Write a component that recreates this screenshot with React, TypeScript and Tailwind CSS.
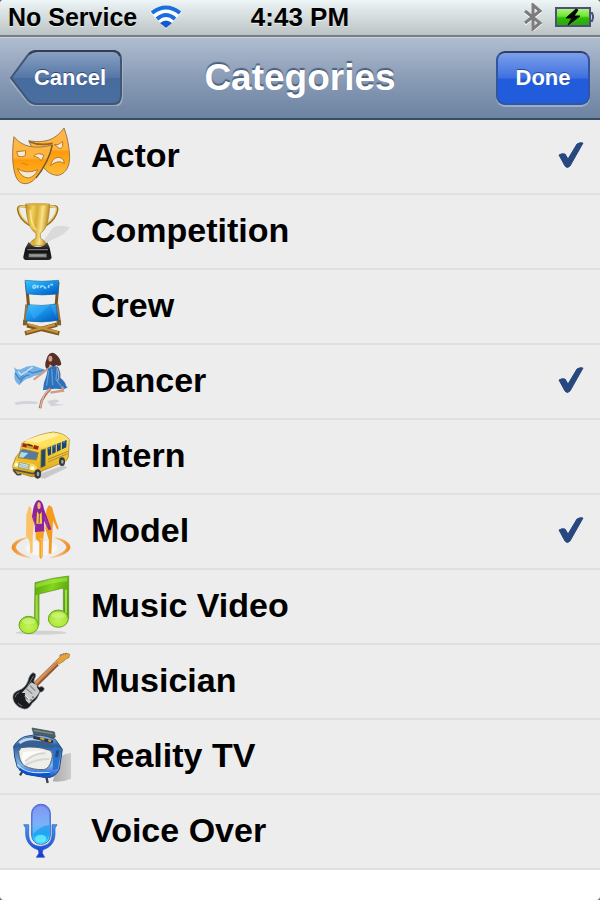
import { useState } from 'react';
import type { ReactNode } from 'react';

interface IconProps {
  viewBox: string;
  children: ReactNode;
}

function Icon({ viewBox, children }: IconProps) {
  return (
    <svg viewBox={viewBox} className="size-15 shrink-0 overflow-visible" aria-hidden="true">
      {children}
    </svg>
  );
}

const UPPER = '33 21 180 180';
const LOWER = '33 246 180 180';

function ActorIcon() {
  return (
    <Icon viewBox={UPPER}>
      <defs>
        <linearGradient id="mask" x1="0" y1="0" x2="0" y2="1">
          <stop offset="0" stopColor="#ffb84a" />
          <stop offset="0.45" stopColor="#ffb33a" />
          <stop offset="0.5" stopColor="#fe9a0c" />
          <stop offset="1" stopColor="#ffbd35" />
        </linearGradient>
      </defs>
      <path d="M86 62 C130 70 165 62 192 24 C202 50 208 82 209 112 C209 146 190 166 171 166 C140 164 120 132 104 100 Z" fill="url(#mask)" stroke="#9c7847" strokeWidth="3" />
      <path d="M88 65 C114 76 136 75 158 70" fill="none" stroke="#926524" strokeWidth="5" />
      <path d="M162 73 Q174 78 188 64 L188 80 Q180 90 172 80 Z" fill="#f3eadb" stroke="#bd7a20" strokeWidth="3" />
      <path d="M151 137 Q158 112 176 112 Q192 114 193 130 Q174 118 151 137 Z" fill="#f3eadb" stroke="#bd7a20" strokeWidth="3" />
      <path d="M42 50 C66 82 108 88 157 75 C150 108 133 143 105 176 C89 194 67 196 54 181 C38 160 34 105 42 50 Z" fill="url(#mask)" stroke="#9c7847" strokeWidth="3" />
      <path d="M157 75 C150 108 133 143 108 174" fill="none" stroke="#755a32" strokeWidth="4" />
      <path d="M50 95 L77 92 L76 107 Q66 113 55 109 Z" fill="#f3eadb" stroke="#bd7a20" strokeWidth="3" />
      <path d="M101 108 Q113 95 132 106 L124 122 Q116 111 101 108 Z" fill="#f3eadb" stroke="#bd7a20" strokeWidth="3" />
      <path d="M52 145 Q76 164 114 149 Q104 170 86 174 Q64 174 52 145 Z" fill="#f3eadb" stroke="#bd7a20" strokeWidth="3" />
      <path d="M66 129 L84 135" stroke="#e67e00" strokeWidth="3" />
    </Icon>
  );
}

function CompetitionIcon() {
  return (
    <Icon viewBox={LOWER}>
      <defs>
        <linearGradient id="gold" x1="0" y1="0" x2="1" y2="0.2">
          <stop offset="0" stopColor="#c18c15" />
          <stop offset="0.3" stopColor="#efcf5f" />
          <stop offset="0.5" stopColor="#d8ab31" />
          <stop offset="0.72" stopColor="#f8e38a" />
          <stop offset="1" stopColor="#b98111" />
        </linearGradient>
        <linearGradient id="plinth" x1="0" y1="0" x2="0" y2="1">
          <stop offset="0" stopColor="#555" />
          <stop offset="0.45" stopColor="#111" />
          <stop offset="1" stopColor="#222" />
        </linearGradient>
      </defs>
      <path d="M130 364 L158 324 Q178 312 210 322 Q195 344 160 357 L132 372 Z" fill="#d4d4d4" opacity="0.8" />
      <path d="M81 261 Q54 253 54 269 Q57 296 90 316 M147 261 Q173 253 172 269 Q168 296 138 316" fill="none" stroke="#9e751d" strokeWidth="7" />
      <path d="M81 261 Q56 254 57 269 Q61 294 90 313 M147 261 Q170 254 169 269 Q164 294 138 313" fill="none" stroke="#ecce70" strokeWidth="4" />
      <path d="M77 252 L149 252 C147 290 144 326 121 340 L121 354 Q137 363 142 377 L86 377 Q91 363 108 354 L108 340 C85 326 80 290 77 252 Z" fill="url(#gold)" stroke="#a47a20" strokeWidth="2" />
      <ellipse cx="113" cy="253" rx="35" ry="4" fill="#d9af43" />
      <path d="M91 270 Q92 310 108 331" fill="none" stroke="#fff0a8" strokeWidth="5" opacity="0.7" />
      <path d="M86 366 L98 378 Q115 384 131 377 L142 367 L149 383 L155 413 Q153 420 145 420 L76 420 Q69 418 70 410 L76 384 Z" fill="url(#plinth)" />
      <path d="M82 389 L144 389" stroke="#777" strokeWidth="4" />
      <rect x="86" y="401" width="54" height="11" fill="#858585" />
      <path d="M92 406 H134" stroke="#aaa" strokeWidth="2" />
    </Icon>
  );
}

function CrewIcon() {
  return (
    <Icon viewBox={UPPER}>
      <defs>
        <linearGradient id="canvasBlue" x1="0" y1="0" x2="1" y2="1">
          <stop offset="0" stopColor="#35c6ff" />
          <stop offset="0.5" stopColor="#168fe7" />
          <stop offset="1" stopColor="#0054b8" />
        </linearGradient>
      </defs>
      <path d="M79 36 L86 112 M174 36 L168 112" stroke="#7b541e" strokeWidth="9" />
      <path d="M81 166 L178 190 M171 164 L75 190" stroke="#7e581b" strokeWidth="13" />
      <path d="M86 163 L174 187 M165 164 L79 187" stroke="#c6933c" strokeWidth="7" />
      <path d="M76 150 L75 166 M176 150 L177 166" stroke="#8c5e1c" strokeWidth="13" />
      <path d="M75 31 Q125 37 176 31 L174 72 Q126 78 80 71 Z" fill="url(#canvasBlue)" stroke="#1b6fa8" strokeWidth="2" />
      <path d="M98 52 Q100 42 108 48 Q105 58 98 52 M112 55 L115 45 M121 54 Q123 45 130 49 M133 48 Q132 56 139 53 M145 54 L147 45 M151 44 L159 44" fill="none" stroke="#8fdcff" strokeWidth="5" />
      <path d="M84 104 Q125 110 169 102 L178 151 Q125 160 73 152 Z" fill="url(#canvasBlue)" stroke="#1666a2" strokeWidth="2" />
      <path d="M84 106 L100 148 L151 105 L170 145 L167 105 Z" fill="#50b8ff" opacity="0.35" />
      <path d="M79 103 L74 151 M172 101 L179 150" stroke="#98713b" strokeWidth="6" />
    </Icon>
  );
}

function DancerIcon() {
  return (
    <Icon viewBox={LOWER}>
      <path d="M43 398 Q70 389 116 396 L108 402 Q72 399 48 405 Z M141 394 Q172 383 178 393 L164 401 L195 404 L153 409 Z" fill="#d0d3d8" />
      <path d="M41 291 Q52 302 64 297 Q82 286 101 287 L137 300 L121 317 Q105 313 91 324 Q74 325 58 346 Q42 334 43 318 Q48 304 41 291 Z" fill="#75b2e6" />
      <path d="M45 309 L59 328 L79 301 L98 309 L131 300 M61 338 Q68 316 88 315" fill="none" stroke="#4488c8" strokeWidth="4" />
      <path d="M54 305 L64 315 L98 291" fill="none" stroke="#c3e0f6" strokeWidth="5" />
      <path d="M143 258 Q151 245 163 250 Q180 260 184 283 Q178 291 169 285 L160 292 L149 283 L147 299 Q134 298 136 278 Z" fill="#543028" />
      <ellipse cx="151" cy="266" rx="6" ry="9" fill="#d8a187" />
      <path d="M155 288 Q129 309 101 329" fill="none" stroke="#d69c87" strokeWidth="6" />
      <path d="M144 296 Q161 286 174 290 Q184 310 181 323 Q198 337 198 348 L203 352 Q193 360 178 357 Q160 354 129 361 Q130 337 139 318 Z" fill="#2c71ba" />
      <path d="M146 302 L140 347 M155 296 L158 345 M171 299 L168 329 L184 349" fill="none" stroke="#5b9ddb" strokeWidth="4" />
      <path d="M151 356 L137 372 L125 392 L120 415" fill="none" stroke="#a96f5a" strokeWidth="8" />
      <path d="M150 356 L134 373 L125 394 L121 413" fill="none" stroke="#e4b5a0" strokeWidth="4" />
      <path d="M151 368 L189 362 L187 350" fill="none" stroke="#d39b83" strokeWidth="7" />
      <path d="M170 293 Q181 311 173 334" fill="none" stroke="#e2ac98" strokeWidth="3" />
    </Icon>
  );
}

function BusIcon() {
  return (
    <Icon viewBox={UPPER}>
      <defs>
        <linearGradient id="bus" x1="0" y1="0" x2="0" y2="1">
          <stop offset="0" stopColor="#fff39e" />
          <stop offset="0.45" stopColor="#f5ca36" />
          <stop offset="1" stopColor="#d9a016" />
        </linearGradient>
      </defs>
      <path d="M100 169 L190 136 L202 143 L133 176 Z" fill="#c9c9c9" />
      <path d="M66 69 Q111 42 160 36 Q193 39 208 58 L205 111 Q201 124 188 128 L126 153 Q116 172 94 170 L40 154 L38 137 L47 112 L60 96 Z" fill="url(#bus)" stroke="#9a7924" strokeWidth="2" />
      <path d="M67 69 Q118 43 160 38 Q189 42 205 57 L127 83 Q96 74 67 69 Z" fill="#ffe15c" />
      <path d="M74 62 Q125 41 160 40 L179 46 L116 68 Z" fill="#fff1a0" />
      <path d="M61 93 L68 87 L115 98 L109 120 L55 113 Z" fill="#4f7da8" stroke="#a98122" strokeWidth="3" />
      <path d="M63 96 L85 99 L70 113 L57 112 Z" fill="#b0d9ee" />
      <path d="M67 70 L114 81 L112 90 L65 82 Z" fill="#d89d24" />
      <path d="M68 74 L80 77 M101 80 L115 84" stroke="#a52222" strokeWidth="11" />
      <path d="M82 73 L98 78" stroke="#4f3c14" strokeWidth="5" />
      <path d="M142 83 L200 60 L199 82 L144 108 Z" fill="#16467b" />
      <path d="M155 77 V104 M169 72 V98 M184 66 V91" stroke="#edbf2d" strokeWidth="4" />
      <path d="M145 86 L150 84 M160 80 L164 78 M174 74 L178 72 M189 67 L195 65" stroke="#4b80b5" strokeWidth="6" />
      <path d="M123 90 L137 86 L136 138 L122 144 Z" fill="#204b65" stroke="#b48922" strokeWidth="2" />
      <path d="M144 118 L204 94 M144 126 L203 101" stroke="#8d7130" strokeWidth="2" />
      <path d="M47 122 L101 132 Q114 139 113 154 L38 140 Z" fill="#f7d858" />
      <path d="M58 127 L88 134 L85 149 L55 142 Z" fill="#d7edf2" stroke="#8b7e40" strokeWidth="2" />
      <path d="M57 132 L87 140 M57 137 L86 145" stroke="#7f9ba5" strokeWidth="2" />
      <circle cx="49" cy="134" r="5" fill="#fff" />
      <circle cx="97" cy="145" r="6" fill="#fff" />
      <path d="M39 149 L98 161 L121 154" fill="none" stroke="#525447" strokeWidth="5" />
      <ellipse cx="113" cy="162" rx="10" ry="14" fill="#333b3c" />
      <ellipse cx="114" cy="162" rx="4" ry="7" fill="#a0a3a0" />
      <ellipse cx="186" cy="125" rx="9" ry="13" fill="#333b3c" />
      <ellipse cx="187" cy="125" rx="4" ry="6" fill="#a0a3a0" />
      <path d="M42 153 L52 164 L64 163" fill="none" stroke="#444" strokeWidth="5" />
    </Icon>
  );
}

function ModelIcon() {
  return (
    <Icon viewBox={LOWER}>
      <defs>
        <linearGradient id="ring" x1="0" y1="0" x2="1" y2="0">
          <stop offset="0" stopColor="#ed8b22" />
          <stop offset="1" stopColor="#f8d8ae" />
        </linearGradient>
        <linearGradient id="ringRight" x1="0" y1="0" x2="1" y2="0">
          <stop offset="0" stopColor="#f8d8ae" />
          <stop offset="1" stopColor="#ed8b22" />
        </linearGradient>
      </defs>
      <ellipse cx="124" cy="385" rx="48" ry="22" fill="#f5f5fa" />
      <path d="M80 353 Q36 362 36 384 Q41 405 92 414 Q48 398 46 382 Q48 366 80 353 Z" fill="url(#ring)" stroke="url(#ring)" strokeWidth="3" />
      <path d="M166 353 Q210 362 210 384 Q204 404 151 414 Q198 398 201 382 Q198 366 166 353 Z" fill="url(#ringRight)" stroke="url(#ringRight)" strokeWidth="3" />
      <path d="M87 258 Q97 261 94 277 L103 294 L98 351 L98 397 L91 402 L89 364 L78 348 L79 285 Z" fill="#fac36a" />
      <path d="M145 257 Q157 255 160 276 Q166 299 176 325 L172 329 L159 302 L157 338 L154 401 L146 401 L147 361 L136 326 L139 270 Z" fill="#f49b20" />
      <path d="M116 240 Q128 241 132 267 L139 286 L154 328 L146 331 L132 302 L133 336 L105 337 L104 309 L96 291 Q101 242 116 240 Z" fill="#8d2499" />
      <ellipse cx="117" cy="257" rx="5" ry="10" fill="#f6b36c" />
      <path d="M111 274 L118 285 L125 275 L126 311 L109 311 Z" fill="#f9cf3b" />
      <path d="M118 284 L117 309" stroke="#813d70" strokeWidth="3" />
      <path d="M105 290 L99 297 L109 323 M134 291 L144 318" fill="none" stroke="#a843ae" strokeWidth="3" />
      <path d="M107 336 L132 334 L129 368 L128 409 L123 418 L118 410 L118 367 L107 356 Z" fill="#f5a126" />
      <path d="M119 357 L126 357 L125 410" fill="none" stroke="#ffc04d" strokeWidth="4" />
    </Icon>
  );
}

function MusicIcon() {
  return (
    <Icon viewBox={UPPER}>
      <defs>
        <linearGradient id="beam" x1="0" y1="0" x2="1" y2="0.5">
          <stop offset="0" stopColor="#559b0b" />
          <stop offset="0.5" stopColor="#83d71b" />
          <stop offset="1" stopColor="#519b0d" />
        </linearGradient>
        <radialGradient id="noteHead" cx="0.5" cy="0.6" r="0.6">
          <stop offset="0" stopColor="#c5f35e" />
          <stop offset="0.7" stopColor="#abe838" />
          <stop offset="1" stopColor="#7cc41f" />
        </radialGradient>
      </defs>
      <ellipse cx="123" cy="188" rx="77" ry="6" fill="#d2d2d2" />
      <path d="M105 38 Q155 23 206 18 L206 146 Q192 154 190 143 L190 54 L117 72 L117 164 Q108 174 103 164 Z" fill="url(#beam)" stroke="#5d8d23" strokeWidth="2" />
      <path d="M107 41 Q153 27 202 22 L201 34 Q150 39 107 54 Z" fill="#a7ec43" opacity="0.6" />
      <path d="M198 59 V143 M110 75 V162" stroke="#a0dc48" strokeWidth="6" />
      <ellipse cx="86" cy="165" rx="29" ry="26" fill="url(#noteHead)" stroke="#6da51e" strokeWidth="3" />
      <ellipse cx="175" cy="146" rx="30" ry="26" fill="url(#noteHead)" stroke="#6da51e" strokeWidth="3" />
      <ellipse cx="86" cy="153" rx="21" ry="10" fill="#e9ffad" opacity="0.4" />
      <ellipse cx="175" cy="135" rx="22" ry="10" fill="#e9ffad" opacity="0.4" />
    </Icon>
  );
}

function GuitarIcon() {
  return (
    <Icon viewBox={LOWER}>
      <path d="M105 345 L171 280" stroke="#8b542c" strokeWidth="16" />
      <path d="M104 343 L171 277" stroke="#d99158" strokeWidth="10" />
      <path d="M107 346 L173 278" stroke="#9e673c" strokeWidth="2" />
      <path d="M167 273 Q179 265 182 255 Q199 246 209 253 L207 263 Q197 266 193 272 L178 282 Z" fill="#e5a13a" stroke="#9c733c" strokeWidth="2" />
      <path d="M179 258 L184 252 M187 256 L191 250 M196 254 L199 249" stroke="#777" strokeWidth="3" />
      <path d="M99 308 Q112 311 104 325 Q97 336 108 344 L117 352 Q127 346 133 356 Q130 366 119 367 Q113 388 96 400 Q84 423 66 415 Q43 407 39 385 Q37 369 54 362 Q76 356 84 333 Q88 314 99 308 Z" fill="#191b1e" stroke="#70747b" strokeWidth="2" />
      <path d="M94 337 L110 345 L112 354 L119 363 Q111 382 98 390 L87 401 L77 391 L75 369 L65 369 Z" fill="#c9cacb" />
      <path d="M79 356 L97 371 M90 347 L106 362 M74 378 L84 389" stroke="#8d8d8d" strokeWidth="4" />
      <path d="M75 374 L87 387" stroke="#f3f3f3" strokeWidth="3" />
      <circle cx="99" cy="382" r="3" fill="#777" />
      <circle cx="93" cy="390" r="3" fill="#777" />
      <path d="M101 317 Q89 338 79 355 M45 382 Q47 371 58 367 M54 400 L67 409" fill="none" stroke="#6e7883" strokeWidth="3" />
    </Icon>
  );
}

function TvIcon() {
  return (
    <Icon viewBox={UPPER}>
      <defs>
        <linearGradient id="tv" x1="0" y1="0" x2="0" y2="1">
          <stop offset="0" stopColor="#9cc2ed" />
          <stop offset="0.25" stopColor="#285d9b" />
          <stop offset="0.7" stopColor="#86b7ee" />
          <stop offset="1" stopColor="#0b4bd0" />
        </linearGradient>
        <linearGradient id="tvShadow" x1="0" y1="0" x2="1" y2="0">
          <stop offset="0" stopColor="#aaa" />
          <stop offset="1" stopColor="#ccc" />
        </linearGradient>
      </defs>
      <path d="M184 108 Q196 100 213 99 V176 Q187 188 158 184 Z" fill="url(#tvShadow)" />
      <path d="M68 153 L60 166 M139 170 L143 189" stroke="#3c4148" strokeWidth="7" />
      <path d="M96 24 L163 36 L166 51 L158 56 L102 46 Z" fill="#4c6063" stroke="#3a494b" strokeWidth="2" />
      <path d="M101 31 L158 41" stroke="#829294" strokeWidth="4" />
      <path d="M41 79 Q56 54 78 49 Q121 38 166 58 L187 88 L178 148 Q165 175 137 173 L78 163 L52 142 L44 111 Z" fill="url(#tv)" stroke="#254d83" strokeWidth="3" />
      <path d="M52 76 Q71 48 99 49 L158 66 L143 82 Q98 63 63 82 Z" fill="#395f8e" />
      <path d="M58 69 Q82 50 124 60" fill="none" stroke="#c0d8f1" strokeWidth="8" />
      <path d="M100 52 L159 65" stroke="#2c3746" strokeWidth="9" />
      <path d="M121 54 L133 59 M145 60 L153 64" stroke="#d99c31" strokeWidth="7" />
      <path d="M161 79 L183 92 L174 147 L158 151 Z" fill="#2670d0" />
      <path d="M174 91 L169 111" stroke="#234c79" strokeWidth="9" />
      <path d="M63 83 Q108 76 149 91 Q161 96 155 119 Q148 146 132 149 Q98 150 72 137 Q57 123 56 94 Z" fill="#eeeeea" stroke="#526474" strokeWidth="3" />
      <path d="M71 132 Q94 104 133 94 Q111 91 69 97 Q62 111 71 132 Z" fill="#fff" opacity="0.8" />
      <path d="M75 125 Q100 99 136 100 M77 135 Q110 116 148 117" fill="none" stroke="#d5d7d3" strokeWidth="6" />
      <path d="M52 134 Q70 155 103 158 L150 158" fill="none" stroke="#b5d9fb" strokeWidth="4" />
      <path d="M58 147 Q80 164 118 165 L150 162" fill="none" stroke="#0a4fcf" strokeWidth="7" />
    </Icon>
  );
}

function MicIcon() {
  return (
    <Icon viewBox={LOWER}>
      <defs>
        <linearGradient id="mic" x1="0" y1="0" x2="0" y2="1">
          <stop offset="0" stopColor="#6e78ed" />
          <stop offset="0.5" stopColor="#63a4f5" />
          <stop offset="0.75" stopColor="#25b0f6" />
          <stop offset="1" stopColor="#59f3ff" />
        </linearGradient>
        <linearGradient id="micStand" x1="0" y1="0" x2="0" y2="1">
          <stop offset="0" stopColor="#459be9" />
          <stop offset="1" stopColor="#1835d2" />
        </linearGradient>
      </defs>
      <path d="M71 314 H86 V341 C86 364 98 377 121 379 C145 377 156 364 156 341 V314 H171 L165 324 V344 C164 370 147 384 129 389 L127 399 L134 412 H109 L117 399 L114 389 C96 384 79 369 77 344 V324 Z" fill="url(#micStand)" stroke="#285dcc" strokeWidth="2" />
      <rect x="95" y="253" width="56" height="120" rx="27" fill="url(#mic)" stroke="#4168ce" strokeWidth="3" />
      <path d="M99 281 Q101 260 122 258 Q144 260 147 281 V314 Q121 319 99 343 Z" fill="#b6d0ff" opacity="0.3" />
      <path d="M99 342 Q119 319 147 315 V345 Q143 369 123 370 Q101 368 99 346 Z" fill="#179bee" opacity="0.45" />
      <ellipse cx="122" cy="356" rx="17" ry="12" fill="#71f8ff" opacity="0.7" />
    </Icon>
  );
}

const categories = [
  { name: 'Actor', icon: <ActorIcon /> },
  { name: 'Competition', icon: <CompetitionIcon /> },
  { name: 'Crew', icon: <CrewIcon /> },
  { name: 'Dancer', icon: <DancerIcon /> },
  { name: 'Intern', icon: <BusIcon /> },
  { name: 'Model', icon: <ModelIcon /> },
  { name: 'Music Video', icon: <MusicIcon /> },
  { name: 'Musician', icon: <GuitarIcon /> },
  { name: 'Reality TV', icon: <TvIcon /> },
  { name: 'Voice Over', icon: <MicIcon /> },
];

function StatusBar() {
  return (
    <div className="grid h-[37px] grid-cols-[1fr_auto_1fr] items-center border-b-2 border-[#758083] bg-linear-to-b from-[#edf5f7] to-[#bbc3c4] px-2 pb-px font-bold text-black [text-shadow:0_1px_0_#ffffff99]">
      <div className="flex items-center gap-3">
        <span className="text-[25px] leading-8 whitespace-nowrap">No Service</span>
        <svg viewBox="0 0 34 24" className="h-6 w-[34px]" role="img" aria-label="Wi-Fi">
          <path d="M1 7 Q17 -6 33 7 L17 24 Z" fill="#fff" />
          <g fill="none" stroke="#1a6fdc" strokeWidth="4">
            <path d="M3 8 Q17 -3 31 8" />
            <path d="M8 14 Q17 6 26 14" />
          </g>
          <path d="M11 18 Q17 13 23 18 L17 23 Z" fill="#1458cd" />
        </svg>
      </div>
      <span className="text-[26px] leading-8">4:43 PM</span>
      <div className="flex items-center justify-end gap-3">
        <svg viewBox="0 0 20 28" className="h-7 w-5" role="img" aria-label="Bluetooth">
          <path d="M2 8 L17 20 L10 26 V2 L17 8 L2 20" fill="none" stroke="#fff" strokeWidth="3" transform="translate(0 1)" />
          <path d="M2 8 L17 20 L10 26 V2 L17 8 L2 20" fill="none" stroke="#7c7c7c" strokeWidth="3" />
        </svg>
        <svg viewBox="0 0 39 20" className="-mr-0.5 h-5 w-[39px]" role="img" aria-label="Battery charging">
          <defs>
            <linearGradient id="charge" x1="0" y1="0" x2="0" y2="1">
              <stop offset="0" stopColor="#b4f58a" />
              <stop offset="0.45" stopColor="#6fe52e" />
              <stop offset="0.55" stopColor="#31bd08" />
              <stop offset="1" stopColor="#29a508" />
            </linearGradient>
          </defs>
          <path d="M35 6 H37 Q39 10 37 14 H35" fill="#d8e0e3" stroke="#4d5078" strokeWidth="2" />
          <rect x="1" y="1" width="34" height="18" fill="url(#charge)" stroke="#4d5078" strokeWidth="2" />
          <path d="M21 2 L11 11 L17 11 L13 18 L25 9 L19 9 L23 3 Z" fill="#080808" stroke="#080808" />
        </svg>
      </div>
    </div>
  );
}

function NavBar({ onCancel, onDone }: { onCancel: () => void; onDone: () => void }) {
  return (
    <header className="grid h-[83px] grid-cols-[1fr_auto_1fr] items-center border-t border-b-2 border-t-[#cbd4df] border-b-[#384c62] bg-linear-to-b from-[#b0bdcf] via-[#8a9cb6] to-[#6c83a2] px-[10px] font-bold text-white">
      <button
        type="button"
        onClick={onCancel}
        className="relative h-14 w-[113px] justify-self-start pl-[7px] text-[22px] leading-8 [text-shadow:0_-1px_0_#33476a]"
      >
        <svg viewBox="0 0 113 56" className="absolute inset-0 size-full" aria-hidden="true">
          <defs>
            <linearGradient id="cancel" x1="0" y1="0" x2="0" y2="1">
              <stop offset="0" stopColor="#8ba2c3" />
              <stop offset="0.5" stopColor="#5577a7" />
              <stop offset="0.52" stopColor="#486b9f" />
              <stop offset="1" stopColor="#4a6e9e" />
            </linearGradient>
          </defs>
          <path d="M0 29 L18 6 Q22 2 27 2 H103 Q112 2 112 11 V46 Q112 55 103 55 H27 Q22 55 18 51 Z" fill="none" stroke="#b0bfd1" strokeWidth="2" transform="translate(0 1)" opacity="0.6" />
          <path d="M1 28 L18 5 Q22 1 27 1 H103 Q111 1 111 10 V45 Q111 54 103 54 H27 Q22 54 18 50 Z" fill="url(#cancel)" stroke="#405675" strokeWidth="2" />
          <path d="M19 4 Q22 1 27 1 H103 Q108 1 110 6" fill="none" stroke="#333f51" strokeWidth="2" />
        </svg>
        <span className="relative">Cancel</span>
      </button>
      <h1 className="text-[37px] leading-10 [text-shadow:0_-2px_1px_#4d5f7a]">Categories</h1>
      <button
        type="button"
        onClick={onDone}
        className="h-[54px] w-[94px] justify-self-end rounded-[9px] border-2 border-[#3155a0] border-t-[#303f63] bg-linear-to-b from-[#7d9eea] from-0% via-[#3d70df] via-50% to-[#205cdb] to-52% text-[22px] leading-8 shadow-[0_2px_0_#9caec5] [text-shadow:0_-1px_0_#234996]"
      >
        Done
      </button>
    </header>
  );
}

export default function App() {
  const [selected, setSelected] = useState<string[]>(['Actor', 'Dancer', 'Model']);

  const toggle = (name: string) => {
    setSelected((current) =>
      current.includes(name) ? current.filter((item) => item !== name) : [...current, name]
    );
  };

  return (
    <div className="min-h-screen bg-[#666] font-['Liberation_Sans',Arial,sans-serif]">
      <main className="min-h-screen overflow-hidden rounded-[4px] bg-white">
        <StatusBar />
        <NavBar onCancel={() => setSelected([])} onDone={() => console.log(selected)} />

        <ul className="bg-[#ededed]">
          {categories.map(({ name, icon }) => (
            <li key={name} className="border-b-2 border-[#e0e0e0]">
              <label className="relative flex h-[73px] cursor-pointer items-center gap-5 pr-4 pl-[11px]">
                {icon}
                <span className="flex-1 pb-1 text-[34px] leading-10 font-bold text-black">{name}</span>
                <input
                  type="checkbox"
                  checked={selected.includes(name)}
                  onChange={() => toggle(name)}
                  className="peer sr-only"
                />
                <svg viewBox="0 0 27 28" className="invisible mb-1 h-7 w-[27px] peer-checked:visible" aria-hidden="true">
                  <path d="M2 14 Q5 12 8 13 L11 18 L20 3 Q23 1 26 2 L13 25 Q10 28 8 25 Z" fill="#27477f" stroke="#27477f" strokeLinejoin="round" />
                </svg>
              </label>
            </li>
          ))}
        </ul>
      </main>
    </div>
  );
}
